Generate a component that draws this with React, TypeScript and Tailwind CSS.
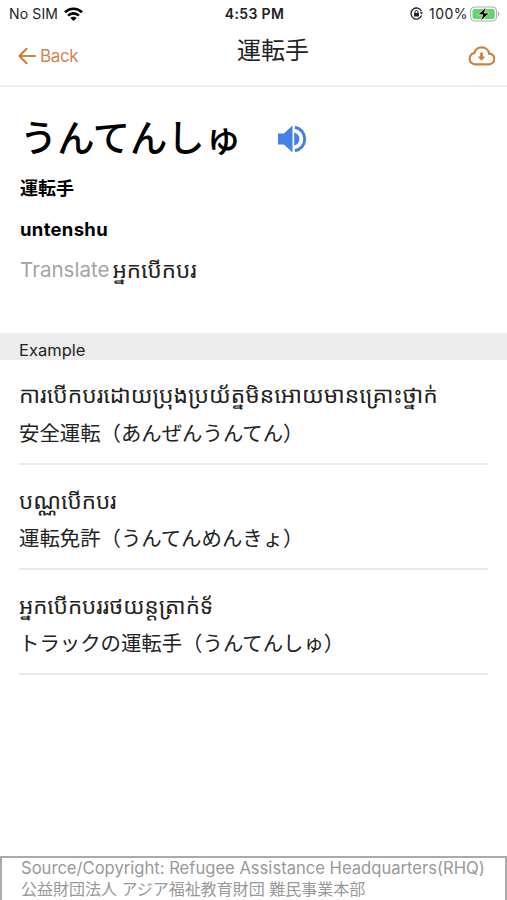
import type { ReactNode } from 'react';

const EXAMPLES = [
  { km: 'ការបើកបរដោយប្រុងប្រយ័ត្នមិនអោយមានគ្រោះថ្នាក់', ja: '安全運転（あんぜんうんてん）', size: 'text-[22.8px]' },
  { km: 'បណ្ណបើកបរ', ja: '運転免許（うんてんめんきょ）', size: 'text-[22.4px]' },
  { km: 'អ្នកបើកបររថយន្តត្រាក់ទ័', ja: 'トラックの運転手（うんてんしゅ）', size: 'text-[22.3px]' },
];

function Khmer({ size = 'text-[22.4px]', children }: { size?: string; children: ReactNode }) {
  return (
    <span
      lang="km"
      className={`whitespace-nowrap font-['Noto_Sans_Khmer','Khmer_OS','DejaVu_Sans',sans-serif] text-[#222] ${size}`}
    >
      {children}
    </span>
  );
}

function StatusBar() {
  return (
    <div className="grid h-[27px] grid-cols-3 items-center pl-[9px] pr-[7px] text-[14px] text-[#222]">
      <div className="flex items-center gap-[6px]">
        <span className="tracking-[0.15px]">No SIM</span>
        <svg width="19" height="14" viewBox="0 0 19 14" fill="none" stroke="#000" strokeWidth="2.7">
          <path d="M1 5.2C5.8.6 13.2.6 18 5.2" />
          <path d="M4.1 8.6c3.1-3 7.7-3 10.8 0" />
          <path d="M6.3 11c1.7-1.7 4.7-1.7 6.4 0L9.5 14z" fill="#000" stroke="none" />
        </svg>
      </div>
      <span className="text-center font-semibold tracking-[0.35px]">4:53 PM</span>
      <div className="flex items-center justify-end">
        <svg width="13" height="13" viewBox="0 0 13 13" fill="none" stroke="#222" strokeWidth="1.3">
          <path d="M11.5 4.2a5.5 5.5 0 1 0 .1 4.4" />
          <path d="M9.8 5.2h3.2l-1.4 2.3z" fill="#222" stroke="none" />
          <rect x="4" y="6" width="5" height="3.5" fill="#222" stroke="none" />
          <path d="M5 6V5a1.5 1.5 0 0 1 3 0v1" strokeWidth="1" />
        </svg>
        <span className="ml-[6px] tracking-[0.45px]">100%</span>
        <svg className="ml-[2px]" width="30" height="16" viewBox="0 0 30 16">
          <rect x=".6" y="1" width="26" height="14" rx="4" fill="#fff" stroke="#aaa" />
          <rect x="2.5" y="3" width="22.2" height="10" rx="2" fill="#68d36b" />
          <path d="M28 5.5c1.7.8 1.7 4.2 0 5z" fill="#aaa" />
          <path d="M16.3.8 7.8 8.8h5L10.5 15.2l9-8.2h-5.2z" fill="#000" stroke="#fff" strokeWidth=".7" />
        </svg>
      </div>
    </div>
  );
}

function Header() {
  return (
    <header className="grid h-[60px] grid-cols-3 border-b-2 border-[#eee] pl-[18px] pr-3">
      <button type="button" className="flex h-[58px] items-center gap-[4px] text-[17px] tracking-[-0.35px] text-[#d2854f]">
        <svg width="18" height="18" viewBox="0 0 18 18" fill="none" stroke="#d2803f" strokeWidth="2.2" strokeLinecap="round" strokeLinejoin="round">
          <path d="M17 9H1.5M8.5 1.8 1.5 9l7 7.2" />
        </svg>
        <span className="pt-px">Back</span>
      </button>
      <h1 className="ml-[33px] h-[48px] text-center text-[24px] leading-[47px] text-[#222]">運転手</h1>
      <div className="flex h-[58px] items-center justify-end">
        <svg width="27" height="20" viewBox="0 0 27 20" fill="none" stroke="#cf8040" strokeWidth="2.2" strokeLinejoin="round">
          <path d="M7 18.3A5.6 5.6 0 0 1 6.2 7.2C7.2 3.6 10.2 1.3 13.6 1.3c3.8 0 7 2.7 7.6 6.4a5.3 5.3 0 0 1-.2 10.6z" />
          <path d="M13.5 6.5V12" strokeWidth="2.8" />
          <path d="M9.6 10.5h7.8l-3.9 4.3z" fill="#cf8040" stroke="none" />
        </svg>
      </div>
    </header>
  );
}

export default function App() {
  return (
    <div className="flex h-[900px] w-full flex-col overflow-hidden bg-white font-['Inter','Noto_Sans_CJK_JP',sans-serif] text-black" lang="ja">
      <StatusBar />
      <Header />

      <section className="h-[246px] pl-5 pt-[25px]">
        <div className="flex h-[54px] items-center">
          <h2 className="whitespace-nowrap text-[37.3px] font-medium leading-[54px]">うんてんしゅ</h2>
          <svg className="ml-[36px]" width="29" height="28" viewBox="0 0 29 28" fill="#4381e3">
            <path d="M0 8.6h5.9L14.5.6v26.8L5.9 19.4H0z" />
            <path d="M16.2 7.4a6.8 6.8 0 0 1 0 13.2z" />
            <path d="M16.9 2.2a12 12 0 0 1 0 23.6" fill="none" stroke="#4381e3" strokeWidth="3" />
          </svg>
        </div>
        <p className="h-[45px] text-[18px] font-bold leading-[45px]">運転手</p>
        <p className="h-[36px] text-[18.5px] font-bold leading-[36px] tracking-[0.3px]">untenshu</p>
        <p className="flex h-[46px] items-center gap-[3px]">
          <span className="text-[20.6px] text-[#a5a5a5]">Translate</span>
          <Khmer>អ្នកបើកបរ</Khmer>
        </p>
      </section>

      <h3 className="h-[27px] bg-[#ededed] pl-[19px] text-[16.5px] leading-[34px] text-[#222]">Example</h3>

      <ul className="px-[19px]">
        {EXAMPLES.map((e) => (
          <li key={e.ja} className="h-[105px] border-b-2 border-[#e9e9e9] pt-[17px]">
            <p className="flex h-[37px] items-center">
              <Khmer size={e.size}>{e.km}</Khmer>
            </p>
            <p className="h-[38px] whitespace-nowrap text-[20.4px] leading-[40px] text-[#222]">{e.ja}</p>
          </li>
        ))}
      </ul>

      <footer className="mt-auto h-[44px] whitespace-nowrap border-x-2 border-t-2 border-[#aaa] pl-[19px] text-[#999]">
        <p className="h-[21px] text-[16.6px] leading-[21px]">Source/Copyright: Refugee Assistance Headquarters(RHQ)</p>
        <p className="h-[20px] text-[16px] leading-[20px]">公益財団法人 アジア福祉教育財団 難民事業本部</p>
      </footer>
    </div>
  );
}
